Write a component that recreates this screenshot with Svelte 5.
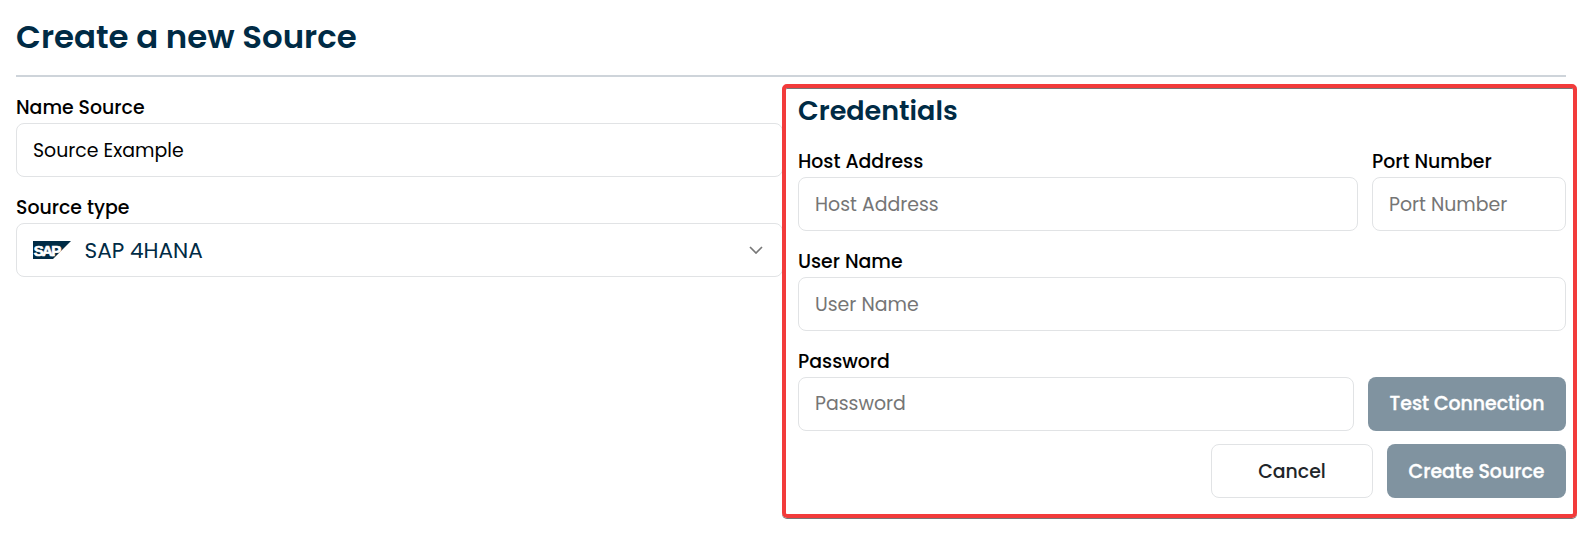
<script>
  let name = $state('Source Example');
  let host = $state('');
  let port = $state('');
  let user = $state('');
  let password = $state('');
</script>

<main class="page">
  <h1>Create a new Source</h1>
  <div class="columns">
    <section class="source">
      <label class="field">
        <span class="label">Name Source</span>
        <input bind:value={name} />
      </label>
      <div class="field">
        <span class="label">Source type</span>
        <button class="select" type="button">
          <svg class="sap" viewBox="0 0 38 18" width="38" height="18" aria-hidden="true">
            <path d="M0 0H38L20 18H0Z" fill="#002b45" />
            <text x="0.8" y="14.5">SAP</text>
          </svg>
          <span class="value">SAP 4HANA</span>
          <svg class="chevron" viewBox="0 0 14 8" width="14" height="8" aria-hidden="true">
            <path d="M1 1L7 7L13 1" fill="none" stroke="#777" stroke-width="1.7" />
          </svg>
        </button>
      </div>
    </section>

    <section class="credentials">
      <h2>Credentials</h2>
      <div class="row host-row">
        <label class="field">
          <span class="label">Host Address</span>
          <input placeholder="Host Address" bind:value={host} />
        </label>
        <label class="field">
          <span class="label">Port Number</span>
          <input placeholder="Port Number" bind:value={port} />
        </label>
      </div>
      <label class="field">
        <span class="label">User Name</span>
        <input placeholder="User Name" bind:value={user} />
      </label>
      <div class="row password-row">
        <label class="field">
          <span class="label">Password</span>
          <input class="password" type="password" placeholder="Password" bind:value={password} />
        </label>
        <button class="primary test" type="button">Test Connection</button>
      </div>
      <div class="actions">
        <button class="cancel" type="button">Cancel</button>
        <button class="primary create" type="button">Create Source</button>
      </div>
      <div class="highlight"></div>
    </section>
  </div>
</main>

<style>
  :global(body) { background: #fff; }
  .page {
    box-sizing: border-box;
    height: 542px;
    padding: 0 15px 0 16px;
    overflow: hidden;
    color: #000;
    font-family: Poppins, Inter, sans-serif;
    font-size: 18.9px;
  }
  .page * { box-sizing: border-box; }
  h1 {
    height: 77px;
    margin: 0;
    padding-top: 13px;
    border-bottom: 2px solid #ced4da;
    color: #002b45;
    font-size: 32.4px;
    font-weight: 600;
    line-height: 48px;
    white-space: nowrap;
  }
  .columns {
    display: grid;
    grid-template-columns: 767px 768px;
    column-gap: 15px;
  }
  .source { padding-top: 16px; }
  .field { display: block; height: 100px; }
  .label {
    display: block;
    height: 30px;
    font-weight: 500;
    line-height: 29px;
    white-space: nowrap;
  }
  input, .select {
    display: block;
    width: 100%;
    height: 54px;
    margin: 0;
    padding: 0 16px;
    border: 1px solid #e1e3e5;
    border-radius: 8px;
    outline: none;
    background: #fff;
    color: #000;
    font: inherit;
  }
  input::placeholder { color: #757575; opacity: 1; }
  .password { padding-bottom: 2px; }
  .select {
    display: flex;
    align-items: center;
    color: #002b45;
    font-size: 21.6px;
  }
  .sap text {
    fill: #fff;
    stroke: #fff;
    stroke-width: 0.7px;
    letter-spacing: -1.7px;
    font: bold 15px "Liberation Sans", sans-serif;
  }
  .value { margin-left: 13.5px; }
  .chevron { margin: 0 3px 1px auto; }
  .credentials { position: relative; }
  h2 {
    height: 70px;
    margin: 0;
    padding-top: 13px;
    color: #002b45;
    font-size: 27px;
    font-weight: 600;
    line-height: 42px;
  }
  .row { display: grid; }
  .host-row { grid-template-columns: 560px 194px; column-gap: 14px; }
  .password-row { grid-template-columns: 556px 198px; column-gap: 14px; align-items: start; }
  .primary, .cancel {
    height: 54px;
    margin: 0;
    padding: 0;
    border: 0;
    border-radius: 8px;
    background: #8093a0;
    color: #fff;
    font: inherit;
    font-weight: 500;
    white-space: nowrap;
  }
  .primary { -webkit-text-stroke: 0.35px #fff; }
  .test { margin-top: 30px; padding-bottom: 2px; }
  .actions {
    display: flex;
    justify-content: flex-end;
    gap: 14px;
    margin-top: -3px;
  }
  .create { width: 179px; }
  .cancel {
    width: 162px;
    border: 1px solid #e1e3e5;
    background: #fff;
    color: #212529;
  }
  .highlight {
    position: absolute;
    top: 7px;
    left: -16px;
    width: 795px;
    height: 434px;
    border: 4.5px solid #f23b3b;
    border-radius: 5px;
    box-shadow: 0 1px 0.5px #777, inset 0 1px 0.5px #777;
    pointer-events: none;
  }
</style>
